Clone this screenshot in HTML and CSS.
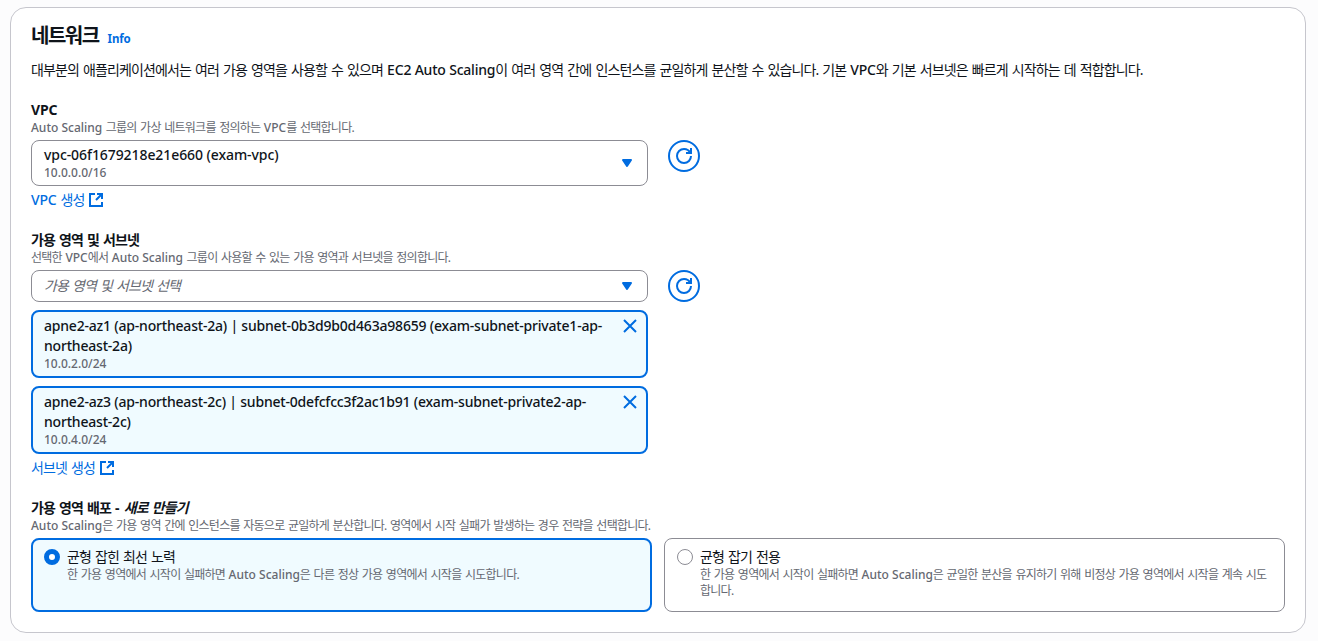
FILE: index.html
```html
<!DOCTYPE html>
<html lang="ko">
  <head>
    <meta charset="UTF-8" />
    <meta name="viewport" content="width=device-width, initial-scale=1.0" />
    <title>네트워크</title>
    <link rel="stylesheet" href="styles.css">
  </head>
  <body>
    <section class="container">
      <div class="header">
        <h2>네트워크</h2>
        <a class="info en">Info</a>
      </div>
      <p class="description">대부분의 애플리케이션에서는 여러 가용 영역을 사용할 수 있으며 <span class="en">EC2 Auto Scaling</span>이 여러 영역 간에 인스턴스를 균일하게 분산할 수 있습니다. 기본 <span class="en">VPC</span>와 기본 서브넷은 빠르게 시작하는 데 적합합니다.</p>

      <div class="field">
        <div class="label"><span class="en">VPC</span></div>
        <div class="hint"><span class="en">Auto Scaling</span> 그룹의 가상 네트워크를 정의하는 <span class="en">VPC</span>를 선택합니다.</div>
        <div class="row">
          <div class="select select-tall">
            <div class="option">
              <div class="value en">vpc-06f1679218e21e660 (exam-vpc)</div>
              <div class="sub en">10.0.0.0/16</div>
            </div>
            <svg class="caret" viewBox="0 0 16 16"><path d="M4 5h8l-4 6z" /></svg>
          </div>
          <button class="refresh" aria-label="새로 고침">
            <svg class="icon" viewBox="0 0 16 16"><path d="M15 8c0 3.87-3.13 7-7 7s-7-3.13-7-7 3.13-7 7-7c2.79 0 5.2 1.63 6.33 4" /><path d="M10 5h5V0" /></svg>
          </button>
        </div>
        <a class="link"><span><span class="en">VPC</span> 생성</span>
          <svg class="icon" viewBox="0 0 16 16"><path d="M7 2H2v12h12v-4" /><path d="M9 2h5v5M14 2 8 8" /></svg>
        </a>
      </div>

      <div class="field">
        <div class="label">가용 영역 및 서브넷</div>
        <div class="hint">선택한 <span class="en">VPC</span>에서 <span class="en">Auto Scaling</span> 그룹이 사용할 수 있는 가용 영역과 서브넷을 정의합니다.</div>
        <div class="row">
          <div class="select">
            <div class="placeholder">가용 영역 및 서브넷 선택</div>
            <svg class="caret" viewBox="0 0 16 16"><path d="M4 5h8l-4 6z" /></svg>
          </div>
          <button class="refresh" aria-label="새로 고침">
            <svg class="icon" viewBox="0 0 16 16"><path d="M15 8c0 3.87-3.13 7-7 7s-7-3.13-7-7 3.13-7 7-7c2.79 0 5.2 1.63 6.33 4" /><path d="M10 5h5V0" /></svg>
          </button>
        </div>
        <div class="tokens">
          <div class="token">
            <div class="option">
              <div class="value en">apne2-az1 (ap-northeast-2a) | subnet-0b3d9b0d463a98659 (exam-subnet-private1-ap-<br />northeast-2a)</div>
              <div class="sub en">10.0.2.0/24</div>
            </div>
            <svg class="close" viewBox="0 0 16 16"><path d="m2 2 12 12M14 2 2 14" /></svg>
          </div>
          <div class="token">
            <div class="option">
              <div class="value en">apne2-az3 (ap-northeast-2c) | subnet-0defcfcc3f2ac1b91 (exam-subnet-private2-ap-<br />northeast-2c)</div>
              <div class="sub en">10.0.4.0/24</div>
            </div>
            <svg class="close" viewBox="0 0 16 16"><path d="m2 2 12 12M14 2 2 14" /></svg>
          </div>
        </div>
        <a class="link"><span>서브넷 생성</span>
          <svg class="icon" viewBox="0 0 16 16"><path d="M7 2H2v12h12v-4" /><path d="M9 2h5v5M14 2 8 8" /></svg>
        </a>
      </div>

      <div class="field">
        <div class="label">가용 영역 배포 - <em>새로 만들기</em></div>
        <div class="hint"><span class="en">Auto Scaling</span>은 가용 영역 간에 인스턴스를 자동으로 균일하게 분산합니다. 영역에서 시작 실패가 발생하는 경우 전략을 선택합니다.</div>
        <div class="tiles">
          <div class="tile selected">
            <span class="radio"></span>
            <div class="option">
              <div class="tile-title">균형 잡힌 최선 노력</div>
              <div class="hint">한 가용 영역에서 시작이 실패하면 <span class="en">Auto Scaling</span>은 다른 정상 가용 영역에서 시작을 시도합니다.</div>
            </div>
          </div>
          <div class="tile">
            <span class="radio"></span>
            <div class="option">
              <div class="tile-title">균형 잡기 전용</div>
              <div class="hint">한 가용 영역에서 시작이 실패하면 <span class="en">Auto Scaling</span>은 균일한 분산을 유지하기 위해 비정상 가용 영역에서 시작을 계속 시도<br />합니다.</div>
            </div>
          </div>
        </div>
      </div>
    </section>
  </body>
</html>
```
FILE: styles.css
```css
* {
  box-sizing: border-box;
}

body {
  margin: 0;
  padding: 7px 12px 0 10px;
  background-color: #fcfcfd;
  color: #0f141a;
  font-family: "Noto Sans", "Noto Sans CJK KR", sans-serif;
  font-size: 14px;
  line-height: 20px;
  letter-spacing: -0.88px;
  word-spacing: 1.25px;
  white-space: nowrap;
}

.container {
  height: 626px;
  padding: 16px 20px 0;
  background-color: #fff;
  border: 1px solid #c6c6cd;
  border-radius: 16px;
}

.en {
  font-weight: 500;
  letter-spacing: -0.2px;
  word-spacing: 0;
}

.header {
  display: flex;
  align-items: baseline;
  gap: 9px;
  height: 24px;
}

h2 {
  margin: 0;
  font-size: 20px;
  line-height: 24px;
  letter-spacing: -1.5px;
}

.info {
  color: #006ce0;
  font-size: 11.5px;
  font-weight: 700;
  line-height: 16px;
}

.description {
  margin: 12px 0 20px;
}

.field {
  margin-bottom: 20px;
}

.label,
.label .en {
  font-weight: 700;
}

.label em {
  margin-left: 1px;
}

.hint,
.sub {
  color: #656871;
  font-size: 12px;
  line-height: 16px;
}

.hint {
  letter-spacing: -0.74px;
  word-spacing: 1.1px;
}

.hint .en,
.sub {
  letter-spacing: 0;
}

.hint .en {
  word-spacing: 0;
}

.row {
  display: flex;
  gap: 20px;
  margin-top: 4px;
}

.select {
  display: flex;
  align-items: center;
  justify-content: space-between;
  width: 617px;
  height: 32px;
  padding: 0 12px;
  border: 1px solid #8c8c94;
  border-radius: 8px;
}

.select-tall {
  height: 46px;
}

.select .value {
  letter-spacing: -0.08px;
}

.placeholder {
  color: #656871;
  font-style: italic;
}

.caret {
  width: 16px;
  height: 16px;
  fill: #006ce0;
  stroke: #006ce0;
  stroke-width: 2;
  stroke-linejoin: round;
}

.refresh {
  display: flex;
  align-items: center;
  justify-content: center;
  width: 32px;
  height: 32px;
  padding: 0;
  background-color: #fff;
  border: 2px solid #006ce0;
  border-radius: 50%;
}

.icon,
.close {
  width: 16px;
  height: 16px;
  fill: none;
  stroke: #006ce0;
  stroke-width: 2;
}

.link {
  display: flex;
  align-items: center;
  gap: 4px;
  height: 20px;
  margin-top: 4px;
  color: #006ce0;
}

.tokens {
  display: grid;
  gap: 8px;
  width: 617px;
  margin-top: 8px;
}

.token {
  display: flex;
  justify-content: space-between;
  height: 68px;
  padding: 4px 8px 4px 11px;
  background-color: #f0fbff;
  border: 2px solid #006ce0;
  border-radius: 8px;
}

.close {
  margin-top: 2px;
}

.tiles {
  display: grid;
  grid-template-columns: 1fr 1fr;
  gap: 12px;
  margin-top: 4px;
}

.tile {
  display: flex;
  gap: 7px;
  height: 74px;
  padding: 8px 12px;
  border: 1px solid #8c8c94;
  border-radius: 8px;
}

.tile.selected {
  padding: 7px 11px;
  background-color: #f0fbff;
  border: 2px solid #006ce0;
}

.radio {
  width: 16px;
  height: 16px;
  margin-top: 2px;
  background-color: #fff;
  border: 1px solid #8c8c94;
  border-radius: 50%;
}

.selected .radio {
  border: 5px solid #006ce0;
}
```
